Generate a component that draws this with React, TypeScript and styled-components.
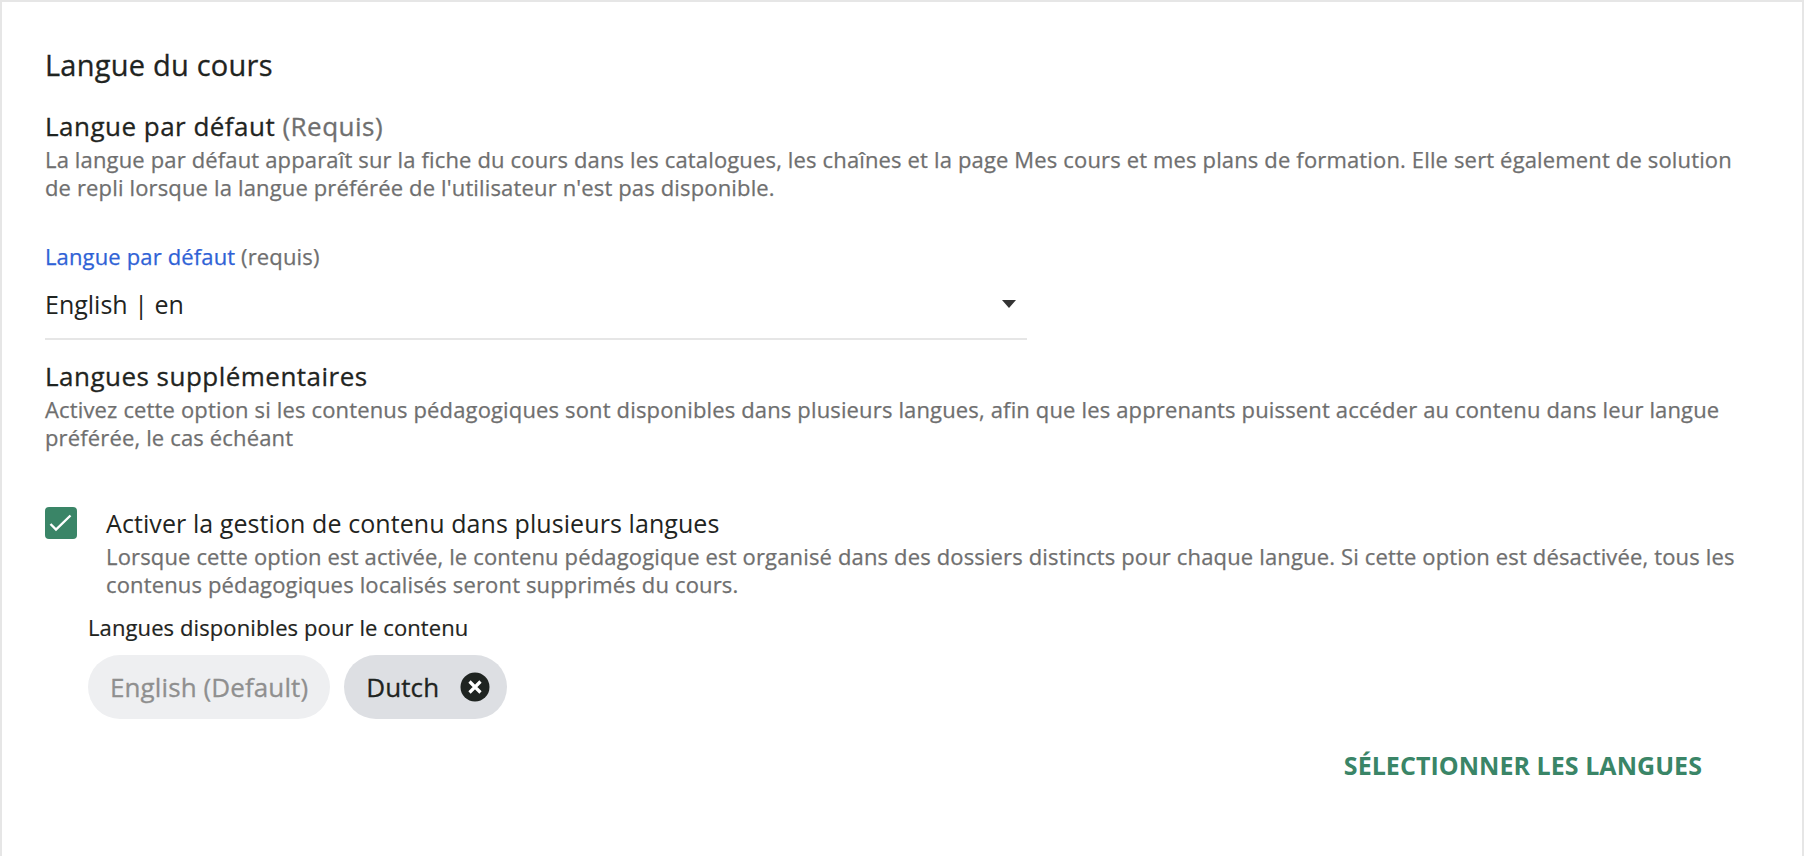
import styled, { createGlobalStyle } from 'styled-components'

const GlobalStyle = createGlobalStyle`
  html, body {
    margin: 0;
    padding: 0;
    background: #ffffff;
  }
  body {
    font-family: "Open Sans", "Liberation Sans", sans-serif;
    color: #1f2421;
  }
`

const Panel = styled.main`
  box-sizing: border-box;
  height: 856px;
  border-top: 2px solid #e6e6e6;
  border-left: 2px solid #e6e6e6;
  border-right: 2px solid #e6e6e6;
  padding: 44px 44px 0 43px;
`

const Heading = styled.h2`
  margin: 0 0 26px;
  font-size: 29px;
  line-height: 38px;
  font-weight: 500;
  letter-spacing: 0.23px;
  -webkit-text-stroke: 0.3px;
`

const SectionTitle = styled.h3`
  margin: 0 0 3px;
  font-size: 26px;
  line-height: 32px;
  font-weight: 500;
  letter-spacing: 0.48px;
  -webkit-text-stroke: 0.3px;
`

const Muted = styled.span`
  color: #6f6f6f;
`

const Description = styled.p`
  margin: 0;
  font-size: 22px;
  line-height: 28px;
  letter-spacing: 0.15px;
  color: #6f6f6f;
  font-weight: 500;
  -webkit-text-stroke: 0.25px;
`

const Field = styled.div`
  width: 982px;
  margin-top: 41px;
  margin-bottom: 20px;
  border-bottom: 2px solid #e6e6e6;
`

const FieldLabel = styled.label`
  display: block;
  font-size: 22px;
  line-height: 28px;
  font-weight: 500;
  letter-spacing: 0.14px;
  color: #2f62d6;
  -webkit-text-stroke: 0.25px;
`

const FieldHint = styled.span`
  color: #6f6f6f;
`

const SelectRow = styled.div`
  display: flex;
  align-items: center;
  justify-content: space-between;
  height: 68px;
  font-size: 25px;
  padding-right: 8px;
`

const Caret = styled.span`
  width: 0;
  height: 0;
  margin-right: 3px;
  border-left: 7.5px solid transparent;
  border-right: 7.5px solid transparent;
  border-top: 8px solid #333333;
`

const CheckRow = styled.div`
  display: flex;
  gap: 29px;
  margin-top: 56px;
`

const CheckBox = styled.span`
  flex: none;
  display: block;
  width: 32px;
  height: 32px;
  border-radius: 4px;
  background: #3a8567;
`

const CheckText = styled.div`
  display: flex;
  flex-direction: column;
`

const CheckLabel = styled.span`
  font-size: 25px;
  line-height: 33px;
  margin-bottom: 2px;
  letter-spacing: 0.08px;
`

const SubBlock = styled.div`
  margin: 15px 0 0 43px;
`

const SubLabel = styled.div`
  font-size: 22px;
  line-height: 28px;
  font-weight: 500;
  letter-spacing: 0.1px;
  -webkit-text-stroke: 0.2px;
`

const ChipRow = styled.div`
  display: flex;
  gap: 14px;
  margin-top: 14px;
`

const Chip = styled.span<{ $disabled?: boolean }>`
  display: flex;
  align-items: center;
  gap: 21px;
  height: 64px;
  padding: 0 ${props => (props.$disabled ? '22px' : '17px')} 0 22px;
  border-radius: 32px;
  font-size: 26px;
  font-weight: 500;
  letter-spacing: 0.1px;
  -webkit-text-stroke: 0.3px;
  background: ${props => (props.$disabled ? '#eeeff1' : '#dddfe3')};
  color: ${props => (props.$disabled ? '#8f8f8f' : '#1f2421')};
`

const Actions = styled.div`
  display: flex;
  justify-content: flex-end;
  padding-right: 56px;
  margin-top: 28px;
`

const TextButton = styled.button`
  border: none;
  background: none;
  padding: 0;
  font-family: inherit;
  font-size: 25px;
  line-height: 36px;
  font-weight: 700;
  letter-spacing: 0.05px;
  color: #3a8567;
`

export default function App() {
  return (
    <>
      <GlobalStyle />
      <Panel>
        <Heading>Langue du cours</Heading>

        <SectionTitle>
          Langue par défaut <Muted>(Requis)</Muted>
        </SectionTitle>
        <Description>
          La langue par défaut apparaît sur la fiche du cours dans les catalogues, les chaînes et la page Mes cours et mes plans de formation. Elle sert également de solution
          <br />
          de repli lorsque la langue préférée de l'utilisateur n'est pas disponible.
        </Description>

        <Field>
          <FieldLabel>
            Langue par défaut <FieldHint>(requis)</FieldHint>
          </FieldLabel>
          <SelectRow>
            English | en
            <Caret />
          </SelectRow>
        </Field>

        <SectionTitle>Langues supplémentaires</SectionTitle>
        <Description>
          Activez cette option si les contenus pédagogiques sont disponibles dans plusieurs langues, afin que les apprenants puissent accéder au contenu dans leur langue
          <br />
          préférée, le cas échéant
        </Description>

        <CheckRow>
          <CheckBox>
            <svg width="32" height="32" viewBox="0 0 32 32" fill="none">
              <path d="M5.5 17 L11 22.5 L25.5 8.5" stroke="#fff" strokeWidth="2.4" />
            </svg>
          </CheckBox>
          <CheckText>
            <CheckLabel>Activer la gestion de contenu dans plusieurs langues</CheckLabel>
            <Description>
              Lorsque cette option est activée, le contenu pédagogique est organisé dans des dossiers distincts pour chaque langue. Si cette option est désactivée, tous les
              <br />
              contenus pédagogiques localisés seront supprimés du cours.
            </Description>
          </CheckText>
        </CheckRow>

        <SubBlock>
          <SubLabel>Langues disponibles pour le contenu</SubLabel>
          <ChipRow>
            <Chip $disabled>English (Default)</Chip>
            <Chip>
              Dutch
              <svg width="30" height="30" viewBox="0 0 30 30">
                <circle cx="15" cy="15" r="14.5" fill="#1f2421" />
                <path d="M9.5 9.5 L20.5 20.5 M20.5 9.5 L9.5 20.5" stroke="#fff" strokeWidth="3.2" />
              </svg>
            </Chip>
          </ChipRow>
        </SubBlock>

        <Actions>
          <TextButton>SÉLECTIONNER LES LANGUES</TextButton>
        </Actions>
      </Panel>
    </>
  )
}
